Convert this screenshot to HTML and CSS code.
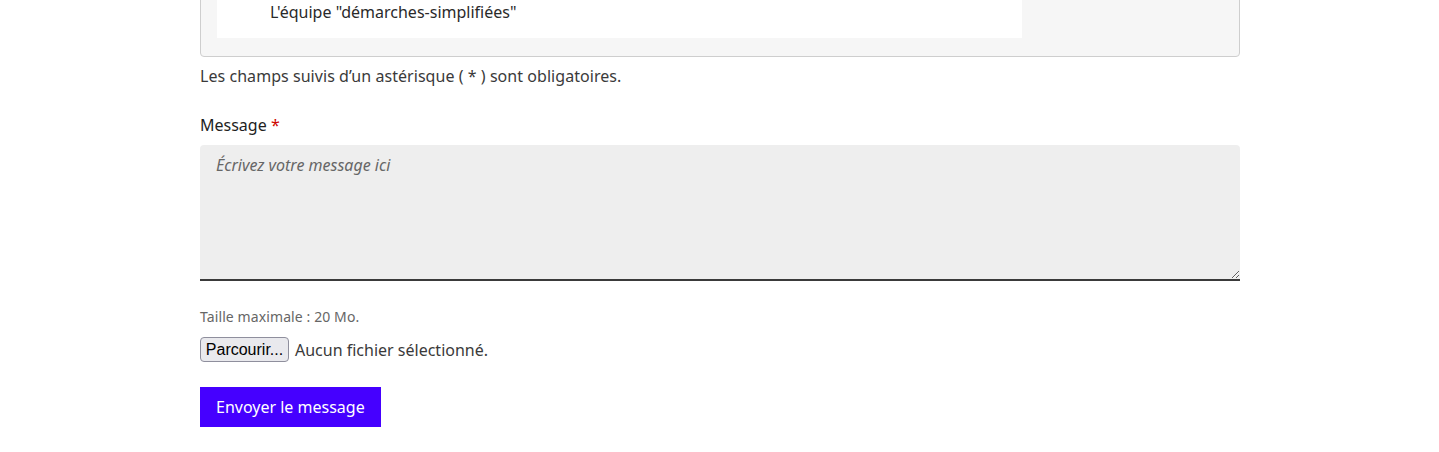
FILE: index.html
```html
<!DOCTYPE html>
<html lang="fr">
<head>
<meta charset="utf-8">
<title>Contact</title>
<link rel="stylesheet" href="styles.css">
</head>
<body>
<main class="container">
  <div class="preview">
    <div class="preview-inner">
      <p class="signature">L'équipe "démarches-simplifiées"</p>
    </div>
  </div>
  <p class="hint">Les champs suivis d’un astérisque ( * ) sont obligatoires.</p>
  <form class="form">
    <label class="label" for="msg">Message <span class="req">*</span></label>
    <textarea id="msg" class="textarea" placeholder="Écrivez votre message ici"></textarea>
    <p class="size">Taille maximale : 20 Mo.</p>
    <div class="file-row">
      <span class="file-btn">Parcourir...</span>
      <span class="file-name">Aucun fichier sélectionné.</span>
    </div>
    <button type="button" class="submit">Envoyer le message</button>
  </form>
</main>
</body>
</html>
```
FILE: styles.css
```css
html, body {
  margin: 0;
  padding: 0;
  background: #fff;
}
body {
  font-family: "Noto Sans", "DejaVu Sans", sans-serif;
  color: #1e1e1e;
  font-size: 16px;
  line-height: 24px;
  overflow: hidden;
}
.container {
  width: 1040px;
  margin: 0 0 0 200px;
}
.preview {
  margin-top: -41px;
  border: 1px solid #cecece;
  border-radius: 4px;
  background: #f6f6f6;
  padding: 16px 217px 18px 16px;
}
.preview-inner {
  background: #fff;
  padding: 24px 53px 14px;
}
.signature {
  margin: 0;
  color: #2a2a2a;
}
.hint {
  margin: 7px 0 0;
  color: #3a3a3a;
  letter-spacing: 0.05px;
}
.form {
  display: flex;
  flex-direction: column;
  align-items: flex-start;
}
.label {
  margin-top: 25px;
  color: #1e1e1e;
}
.req {
  color: #ce0500;
}
.textarea {
  box-sizing: border-box;
  margin: 8px 0 0;
  width: 1040px;
  height: 136px;
  border: 0;
  border-bottom: 2px solid #3a3a3a;
  border-radius: 4px 4px 0 0;
  background: #eeeeee;
  padding: 8px 16px;
  font-family: inherit;
  font-size: 16px;
  line-height: 24px;
  color: #1e1e1e;
  resize: vertical;
  outline: none;
  display: block;
}
.textarea::placeholder {
  color: #666;
  font-style: italic;
  opacity: 1;
}
.size {
  margin: 26px 0 0;
  font-size: 14px;
  line-height: 20px;
  color: #666;
  letter-spacing: 0.1px;
}
.file-row {
  margin-top: 10px;
  display: flex;
  align-items: center;
  height: 25px;
}
.file-btn {
  box-sizing: border-box;
  height: 25px;
  width: 89px;
  display: flex;
  align-items: center;
  justify-content: center;
  font-family: "Liberation Sans", Arial, sans-serif;
  font-size: 16px;
  color: #000;
  background: #e9e9ed;
  border: 1px solid #8f8f9d;
  border-radius: 4px;
}
.file-name {
  margin-left: 6px;
  color: #3a3a3a;
}
.submit {
  margin-top: 25px;
  height: 40px;
  padding: 0 16px;
  border: 0;
  background: #4500ff;
  color: #fff;
  font-family: inherit;
  font-size: 16px;
  line-height: 24px;
}
```
